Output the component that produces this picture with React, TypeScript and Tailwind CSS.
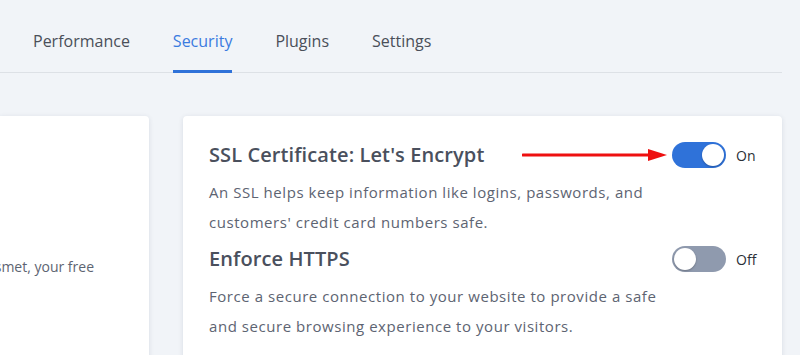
import React from 'react';

type ToggleProps = {
  on: boolean;
};

const Toggle = ({ on }: ToggleProps) => (
  <div className="flex items-center gap-[10px]">
    <div
      className={
        on
          ? 'flex h-[26px] w-[54px] items-center justify-end rounded-full bg-[#2f72d9] px-[2px]'
          : 'flex h-[26px] w-[54px] items-center justify-start rounded-full bg-[#8f9aae] px-[2px]'
      }
    >
      <div className="h-[22px] w-[22px] rounded-full bg-white shadow-[0_1px_2px_rgba(0,0,0,0.25)]" />
    </div>
    <span className="w-[20px] text-[14px] text-[#2b2f36]">{on ? 'On' : 'Off'}</span>
  </div>
);

const Arrow = () => (
  <svg width="146" height="14" viewBox="0 0 146 14" className="mr-[4px]">
    <line x1="1" y1="7" x2="130" y2="7" stroke="#ee1010" strokeWidth="3" strokeLinecap="round" />
    <polygon points="126,1 145,7 126,13" fill="#ee1010" />
  </svg>
);

type SettingProps = {
  title: string;
  text: string;
  on: boolean;
  arrow?: boolean;
};

const Setting = ({ title, text, on, arrow }: SettingProps) => (
  <div>
    <div className="flex h-[30px] items-center justify-between">
      <h3 className="text-[20px] font-semibold tracking-[0.1px] text-[#4a505d]">{title}</h3>
      <div className="flex items-center">
        {arrow && <Arrow />}
        <Toggle on={on} />
      </div>
    </div>
    <p className="mt-[7px] w-[462px] text-[15px] leading-[30px] tracking-[0.55px] text-[#5d6472]">{text}</p>
  </div>
);

const App = () => {
  const tabs = ['Performance', 'Security', 'Plugins', 'Settings'];
  return (
    <div className="h-[355px] w-[800px] overflow-hidden bg-[#f1f4f8]" style={{ fontFamily: '"Open Sans", sans-serif' }}>
      <nav className="mr-[18px] flex h-[73px] items-end gap-[43px] border-b border-[#dde1e6] pl-[33px]">
        {tabs.map((tab) => (
          <div
            key={tab}
            className={
              tab === 'Security'
                ? 'mb-[-1px] border-b-[3px] border-[#2f72d9] pb-[17px] text-[16px] text-[#3b7be0]'
                : 'mb-[-1px] border-b-[3px] border-transparent pb-[17px] text-[16px] text-[#4a4f59]'
            }
          >
            {tab}
          </div>
        ))}
      </nav>
      <div className="mt-[43px] flex gap-[34px]">
        <div className="h-[260px] w-[149px] overflow-hidden rounded-r-[4px] bg-white pt-[140px] shadow-[0_1px_5px_rgba(30,50,80,0.12)]">
          <div className="flex justify-end pr-[55px]">
            <p className="shrink-0 whitespace-nowrap text-[14px] text-[#5d6472]">smet, your free</p>
          </div>
        </div>
        <div className="h-[260px] w-[599px] rounded-[4px] bg-white pl-[26px] pr-[26px] pt-[24px] shadow-[0_1px_5px_rgba(30,50,80,0.12)]">
          <Setting
            title="SSL Certificate: Let's Encrypt"
            text="An SSL helps keep information like logins, passwords, and customers' credit card numbers safe."
            on
            arrow
          />
          <div className="mt-[7px]">
            <Setting
              title="Enforce HTTPS"
              text="Force a secure connection to your website to provide a safe and secure browsing experience to your visitors."
              on={false}
            />
          </div>
        </div>
      </div>
    </div>
  );
};

export default App;
